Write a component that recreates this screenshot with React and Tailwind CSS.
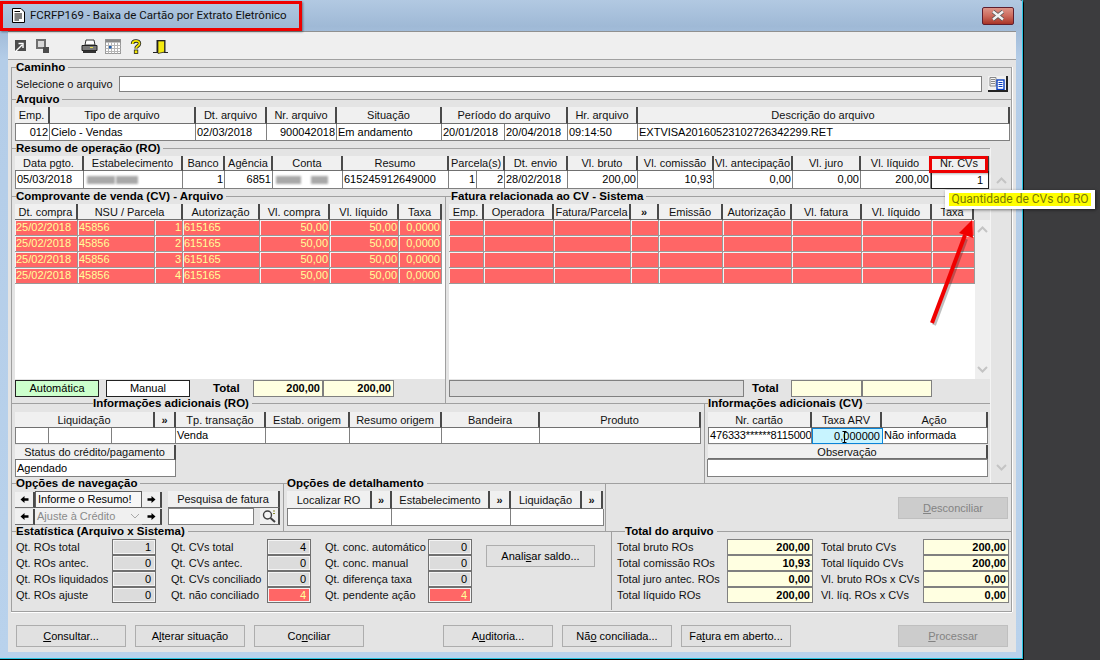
import React from "react";

const F = "font-['Liberation_Sans',Arial,sans-serif]";

function Legend({ tick = "w-[4px]", children }) {
  return (
    <div className="-mt-[6px] flex h-[13px] items-center">
      <div className={`${tick} h-px shrink-0 bg-[#a0a0a0]`} />
      <span className="text-[11.5px] leading-[13px] font-bold whitespace-nowrap text-black">{children}</span>
      <div className="ml-[3px] h-px flex-1 bg-[#a0a0a0]" />
    </div>
  );
}

function H({ w, children }) {
  return (
    <div className={`${w} flex h-full shrink-0 items-center justify-center overflow-hidden border-r-2 border-b border-r-[#4a4a4a] border-b-[#707070] bg-[#f0f0f0] pt-px whitespace-nowrap text-[#111]`}>
      {children}
    </div>
  );
}

function D({ w, children, right, cls = "" }) {
  return (
    <div className={`${w} ${right ? "justify-end" : "justify-start"} ${cls} flex h-full shrink-0 items-center overflow-hidden border-r border-b border-[#808080] bg-white px-px whitespace-nowrap text-black`}>
      {children}
    </div>
  );
}

function Data({ h = "h-[17px]", children }) {
  return <div className={`${h} flex border-l border-[#808080]`}>{children}</div>;
}

function R({ w, children, right, cls = "" }) {
  return (
    <div className={`${w} ${right ? "justify-end" : "justify-start"} ${cls} flex h-full shrink-0 items-center overflow-hidden border-r border-b border-r-[#9a9a9a] border-b-[#9a9a9a] bg-[#ff6666] px-px shadow-[inset_1px_1px_0_#f4f4f4] whitespace-nowrap text-[#ffff99]`}>
      {children}
    </div>
  );
}

function Blur({ w }) {
  return <span className={`${w} inline-block h-[8px] bg-[#a8a8a8] blur-[1px]`} />;
}

function Chevron({ up }) {
  return (
    <svg width="11" height="7" viewBox="0 0 11 7" className="block">
      <path d={up ? "M1 6 L5.5 1.5 L10 6" : "M1 1 L5.5 5.5 L10 1"} fill="none" stroke="#c4c4c4" strokeWidth="2" />
    </svg>
  );
}

function DoubleArrow() {
  return <span className="text-[11px] leading-none font-bold">»</span>;
}

function YellowBox({ w, children, cls = "" }) {
  return (
    <div className={`${w} ${cls} flex h-full shrink-0 items-center justify-end border border-[#808080] bg-[#ffffe1] pr-[2px] font-bold text-black`}>
      {children}
    </div>
  );
}

function Btn({ children, disabled, cls = "" }) {
  return (
    <div className={`${cls} flex h-[22px] w-[110px] shrink-0 items-center justify-center border ${disabled ? "border-[#bfbfbf] bg-[#cccccc] text-[#838383]" : "border-[#adadad] bg-[#e1e1e1] text-black"}`}>
      {children}
    </div>
  );
}

function U({ children }) {
  return <span className="underline">{children}</span>;
}

function StatValue({ v, red }) {
  return (
    <div className={`flex h-[16px] w-[44px] items-center justify-end border border-[#707070] pr-[4px] shadow-[inset_1px_1px_0_#f4f4f4,inset_-1px_-1px_0_#f4f4f4] ${red ? "bg-[#ff6666] text-[#ffff99]" : "bg-[#dcdcdc] text-black"}`}>
      {v}
    </div>
  );
}

function StatCol({ w, mr, items }) {
  return (
    <div className={`${mr} flex shrink-0`}>
      <div className={`${w} flex flex-col`}>
        {items.map((i) => (
          <div key={i[0]} className="flex h-[16px] items-center whitespace-nowrap text-[#111]">{i[0]}</div>
        ))}
      </div>
      <div className="flex flex-col">
        {items.map((i) => (
          <StatValue key={i[0]} v={i[1]} red={i[2]} />
        ))}
      </div>
    </div>
  );
}

function TotCol({ w, vw, items, cls = "" }) {
  return (
    <div className={`${cls} flex shrink-0`}>
      <div className={`${w} flex flex-col`}>
        {items.map((i) => (
          <div key={i[0]} className="flex h-[16px] items-center whitespace-nowrap text-[#111]">{i[0]}</div>
        ))}
      </div>
      <div className="flex flex-col">
        {items.map((i) => (
          <div key={i[0]} className="h-[16px]">
            <YellowBox w={vw}>{i[1]}</YellowBox>
          </div>
        ))}
      </div>
    </div>
  );
}

function NavArrow({ left }) {
  return (
    <div className="flex h-[16px] w-[20px] shrink-0 items-center justify-center border-r-2 border-b border-r-[#4a4a4a] border-b-[#707070] bg-[#f0f0f0]">
      <svg width="9" height="9" viewBox="0 0 9 9">
        <path d={left ? "M0.5 4.5 L4.5 1 V3.3 H8.5 V5.7 H4.5 V8 Z" : "M8.5 4.5 L4.5 1 V3.3 H0.5 V5.7 H4.5 V8 Z"} fill="#000" />
      </svg>
    </div>
  );
}

const rows = ["1", "2", "3", "4"];

export default function App() {
  return (
    <div className={`${F} relative h-[660px] w-[1100px] overflow-hidden bg-[#3c3c3e] text-[11px] leading-none`}>
      {/* window */}
      <div className="flex h-[660px] w-[1024px] flex-col rounded-tr-[4px] border-r border-b border-r-[#000] border-b-[#000] bg-[linear-gradient(to_bottom,#b2c9e2_0%,#9fb9d6_4%,#b4cde8_9%,#b9d2ec_100%)]">
        <div className="flex h-[659px] flex-col border-r border-b border-[#29c4e0]">
          {/* title bar */}
          <div className="flex h-[31px] shrink-0 items-center justify-between pr-[8px] pl-[12px]">
            <div className="flex items-center gap-[5px]">
              <svg width="13" height="15" viewBox="0 0 13 15">
                <path d="M0.5 0.5 H9 L12.5 4 V14.5 H0.5 Z" fill="#fff" stroke="#000" />
                <path d="M2.5 3.5 H8 M2.5 6 H10 M2.5 8 H10 M2.5 10 H10 M2.5 12 H7" stroke="#000" />
              </svg>
              <span className="font-['Roboto',sans-serif] text-[11.5px] text-[#101010]">FCRFP169 - Baixa de Cartão por Extrato Eletrônico</span>
            </div>
            <div className="flex h-[18px] w-[32px] items-center justify-center rounded-[2px] border border-[#5e1e2e] bg-gradient-to-b from-[#dd9488] via-[#cc6a5c] to-[#a83226]">
              <svg width="14" height="11" viewBox="0 0 14 11">
                <path d="M2 1.5 L12 9.5 M12 1.5 L2 9.5" stroke="#555" strokeWidth="4" />
                <path d="M2 1.5 L12 9.5 M12 1.5 L2 9.5" stroke="#f2f2f2" strokeWidth="2.4" />
              </svg>
            </div>
          </div>

          {/* body */}
          <div className="mr-[6px] ml-[8px] flex h-[621px] shrink-0 flex-col bg-[#e4e4e4]">
            {/* toolbar */}
            <div className="flex h-[29px] shrink-0 items-center border-t border-b border-t-[#909090] border-b-[#a0a0a0] bg-[#efefef] pt-[1px] pl-[6px]">
              <svg width="13" height="14" viewBox="0 0 13 14" className="mr-[8px]">
                <rect x="1" y="1" width="11" height="11" fill="#4c4c4c" />
                <path d="M1 13 L8 6 M4.5 4.5 H9 V9" stroke="#fff" strokeWidth="1.4" fill="none" />
              </svg>
              <svg width="15" height="15" viewBox="0 0 15 15" className="mr-[31px]">
                <rect x="1" y="0" width="10" height="10" fill="#6e6e6e" />
                <rect x="3" y="2" width="6" height="6" fill="#d8d8d8" />
                <rect x="8" y="8" width="6" height="6" fill="#4c4c4c" />
              </svg>
              <svg width="17" height="15" viewBox="0 0 17 15" className="mr-[7px]">
                <path d="M5 1 H13 L14 6 H4 Z" fill="#fff" stroke="#333" />
                <path d="M1 6.5 H16 V11.5 H1 Z" fill="#7a7a7a" stroke="#222" />
                <path d="M2 11.5 H15 V14 H2 Z" fill="#333" />
                <path d="M9 8.5 H12" stroke="#e8e050" strokeWidth="1" />
              </svg>
              <svg width="16" height="15" viewBox="0 0 16 15" className="mr-[9px]">
                <rect x="0.5" y="0.5" width="15" height="14" fill="#fff" stroke="#999" />
                <rect x="0.5" y="0.5" width="15" height="3" fill="#888" />
                <path d="M0.5 6.5 H15.5 M0.5 9.5 H15.5 M0.5 12.5 H15.5 M3.5 3.5 V14.5 M6.5 3.5 V14.5 M9.5 3.5 V14.5 M12.5 3.5 V14.5" stroke="#b5b5b5" />
                <rect x="4" y="7" width="2.5" height="2.5" fill="#1f5fb0" />
              </svg>
              <svg width="12" height="15" viewBox="0 0 12 15" className="mr-[11px]">
                <path d="M2.5 5 C2.5 1 9.5 1 9.5 4.5 C9.5 7 6 7 6 9.5" fill="none" stroke="#222" strokeWidth="3.4" />
                <path d="M2.5 5 C2.5 1 9.5 1 9.5 4.5 C9.5 7 6 7 6 9.5" fill="none" stroke="#f2e600" strokeWidth="1.8" />
                <rect x="4.3" y="11" width="3.5" height="3.5" fill="#f2e600" stroke="#222" strokeWidth="0.8" />
              </svg>
              <svg width="15" height="15" viewBox="0 0 15 15">
                <path d="M3.5 13.5 V1 H12.5 V13.5" fill="#222" />
                <path d="M5 2 H11.5 V13 L5 14.5 Z" fill="#f4ea10" stroke="#222" strokeWidth="0.7" />
                <path d="M0 13.5 H5 M11 13.5 H15" stroke="#222" />
              </svg>
            </div>

            {/* frame */}
            <div className="mt-[7px] ml-[3px] flex h-[545px] w-[1001px] shrink-0 flex-col border-x border-b border-[#a0a0a0] shadow-[1px_0_0_#fff,0_1px_0_#fff]">
              {/* Caminho */}
              <div className="h-[32px] shrink-0">
                <Legend>Caminho</Legend>
                <div className="mt-[2px] flex h-[16px] items-center pl-[4px]">
                  <span className="w-[103px] shrink-0 whitespace-nowrap text-[#111]">Selecione o arquivo</span>
                  <div className="h-full w-[863px] shrink-0 border border-[#808080] bg-white" />
                  <div className="ml-[6px] flex h-[16px] w-[20px] shrink-0 items-center justify-center border-r-2 border-b-2 border-r-[#222] border-b-[#222] bg-[#f0f0f0]">
                    <svg width="16" height="13" viewBox="0 0 16 13">
                      <path d="M1 0.5 H7 V9 H1 Z" fill="#f4f4f4" stroke="#888" />
                      <path d="M2 2.5 H6 M2 4.5 H6 M2 6.5 H6" stroke="#888" />
                      <rect x="8" y="3" width="7" height="9.5" fill="#fff" stroke="#0a3fc0" strokeWidth="1.4" />
                      <path d="M9.5 5.5 H13.5 M9.5 7.5 H13.5 M9.5 9.5 H13.5" stroke="#0a3fc0" />
                    </svg>
                  </div>
                </div>
              </div>

              {/* Arquivo */}
              <div className="h-[49px] shrink-0">
                <Legend>Arquivo</Legend>
                <div className="mt-px pl-[3px]">
                  <div className="flex h-[17px]">
                    <H w="w-[35px]">Emp.</H>
                    <H w="w-[146px]">Tipo de arquivo</H>
                    <H w="w-[71px]">Dt. arquivo</H>
                    <H w="w-[70px]">Nr. arquivo</H>
                    <H w="w-[105px]">Situação</H>
                    <H w="w-[126px]">Período do arquivo</H>
                    <H w="w-[70px]">Hr. arquivo</H>
                    <H w="w-[372px]">Descrição do arquivo</H>
                  </div>
                  <Data>
                    <D w="w-[34px]" right>012</D>
                    <D w="w-[146px]">Cielo - Vendas</D>
                    <D w="w-[71px]">02/03/2018</D>
                    <D w="w-[70px]" right>900042018</D>
                    <D w="w-[105px]">Em andamento</D>
                    <D w="w-[63px]">20/01/2018</D>
                    <D w="w-[63px]">20/04/2018</D>
                    <D w="w-[70px]">09:14:50</D>
                    <D w="w-[372px]">EXTVISA20160523102726342299.RET</D>
                  </Data>
                </div>
              </div>

              {/* Main block */}
              <div className="flex h-[335px] shrink-0">
                <div className="flex w-[978px] shrink-0 flex-col">
                  {/* Resumo */}
                  <div className="h-[48px] shrink-0">
                    <Legend>Resumo de operação (RO)</Legend>
                    <div className="mt-px pl-[3px]">
                      <div className="flex h-[15px]">
                        <H w="w-[69px]">Data pgto.</H>
                        <H w="w-[99px]">Estabelecimento</H>
                        <H w="w-[42px]">Banco</H>
                        <H w="w-[48px]">Agência</H>
                        <H w="w-[70px]">Conta</H>
                        <H w="w-[106px]">Resumo</H>
                        <H w="w-[56px]">Parcela(s)</H>
                        <H w="w-[63px]">Dt. envio</H>
                        <H w="w-[70px]">Vl. bruto</H>
                        <H w="w-[76px]">Vl. comissão</H>
                        <H w="w-[79px]">Vl. antecipação</H>
                        <H w="w-[68px]">Vl. juro</H>
                        <H w="w-[70px]">Vl. líquido</H>
                        <H w="w-[58px]">Nr. CVs</H>
                      </div>
                      <Data h="h-[18px]">
                        <D w="w-[68px]">05/03/2018</D>
                        <D w="w-[99px]" cls="gap-px pl-[3px]"><Blur w="w-[28px]" /><Blur w="w-[22px]" /></D>
                        <D w="w-[42px]" right>1</D>
                        <D w="w-[48px]" right>6851</D>
                        <D w="w-[70px]" cls="gap-[10px] pl-[3px]"><Blur w="w-[25px]" /><Blur w="w-[17px]" /></D>
                        <D w="w-[106px]">615245912649000</D>
                        <D w="w-[28px]" right>1</D>
                        <D w="w-[28px]" right>2</D>
                        <D w="w-[63px]">28/02/2018</D>
                        <D w="w-[70px]" right>200,00</D>
                        <D w="w-[76px]" right>10,93</D>
                        <D w="w-[79px]" right>0,00</D>
                        <D w="w-[68px]" right>0,00</D>
                        <D w="w-[70px]" right>200,00</D>
                        <div className="flex h-full w-[58px] shrink-0 items-center justify-end border border-[#222] bg-white pr-[5px]">1</div>
                      </Data>
                    </div>
                  </div>

                  {/* Split comprovante / fatura */}
                  <div className="flex h-[207px] shrink-0">
                    <div className="w-[434px] shrink-0 border-r border-[#a0a0a0]">
                      <Legend>Comprovante de venda (CV) - Arquivo</Legend>
                      <div className="mt-px pl-[3px]">
                        <div className="flex h-[16px]">
                          <H w="w-[63px]">Dt. compra</H>
                          <H w="w-[105px]">NSU / Parcela</H>
                          <H w="w-[77px]">Autorização</H>
                          <H w="w-[70px]">Vl. compra</H>
                          <H w="w-[69px]">Vl. líquido</H>
                          <H w="w-[43px]">Taxa</H>
                        </div>
                        <div className="h-[159px] bg-white">
                          {rows.map((n) => (
                            <div key={n} className="flex h-[16px]">
                              <R w="w-[63px]">25/02/2018</R>
                              <R w="w-[77px]">45856</R>
                              <R w="w-[28px]" right>{n}</R>
                              <R w="w-[77px]">615165</R>
                              <R w="w-[70px]" right>50,00</R>
                              <R w="w-[69px]" right>50,00</R>
                              <R w="w-[43px]" right>0,0000</R>
                            </div>
                          ))}
                        </div>
                        <div className="mt-px flex h-[17px] items-center">
                          <div className="flex h-full w-[84px] items-center justify-center border border-[#222] bg-[#ccffcc]">Automática</div>
                          <div className="ml-[7px] flex h-full w-[84px] items-center justify-center border border-[#222] bg-white">Manual</div>
                          <span className="ml-[23px] w-[40px] text-[11.5px] font-bold">Total</span>
                          <YellowBox w="w-[70px]">200,00</YellowBox>
                          <YellowBox w="w-[71px]">200,00</YellowBox>
                        </div>
                      </div>
                    </div>
                    <div className="min-w-0 flex-1">
                      <Legend tick="w-[5px]">Fatura relacionada ao CV - Sistema</Legend>
                      <div className="mt-px pl-[3px]">
                        <div className="flex h-[16px]">
                          <H w="w-[35px]">Emp.</H>
                          <H w="w-[70px]">Operadora</H>
                          <H w="w-[77px]">Fatura/Parcela</H>
                          <H w="w-[28px]"><DoubleArrow /></H>
                          <H w="w-[64px]">Emissão</H>
                          <H w="w-[69px]">Autorização</H>
                          <H w="w-[70px]">Vl. fatura</H>
                          <H w="w-[70px]">Vl. líquido</H>
                          <H w="w-[42px]">Taxa</H>
                        </div>
                        <div className="flex h-[159px]">
                          <div className="w-[526px] shrink-0 bg-white">
                            {rows.map((n) => (
                              <div key={n} className="flex h-[16px]">
                                <R w="w-[35px]" />
                                <R w="w-[70px]" />
                                <R w="w-[77px]" />
                                <R w="w-[28px]" />
                                <R w="w-[64px]" />
                                <R w="w-[69px]" />
                                <R w="w-[70px]" />
                                <R w="w-[70px]" />
                                <R w="w-[43px]" />
                              </div>
                            ))}
                          </div>
                          <div className="flex w-[15px] shrink-0 flex-col items-center justify-between bg-[#efefef] py-[6px]">
                            <Chevron up />
                            <Chevron />
                          </div>
                        </div>
                        <div className="mt-px flex h-[17px] items-center">
                          <div className="h-full w-[295px] border border-[#808080] bg-[#dcdcdc]" />
                          <span className="ml-[8px] w-[39px] text-[11.5px] font-bold">Total</span>
                          <YellowBox w="w-[71px]" />
                          <YellowBox w="w-[70px]" />
                        </div>
                      </div>
                    </div>
                  </div>

                  {/* Info */}
                  <div className="flex h-[80px] shrink-0">
                    <div className="w-[693px] shrink-0 border-r border-[#a0a0a0]">
                      <Legend tick="w-[81px]">Informações adicionais (RO)</Legend>
                      <div className="mt-[2px] pl-[3px]">
                        <div className="flex h-[16px]">
                          <H w="w-[140px]">Liquidação</H>
                          <H w="w-[21px]"><DoubleArrow /></H>
                          <H w="w-[90px]">Tp. transação</H>
                          <H w="w-[84px]">Estab. origem</H>
                          <H w="w-[92px]">Resumo origem</H>
                          <H w="w-[98px]">Bandeira</H>
                          <H w="w-[161px]">Produto</H>
                        </div>
                        <Data h="h-[16px]">
                          <D w="w-[33px]" />
                          <D w="w-[63px]" />
                          <D w="w-[64px]" />
                          <D w="w-[90px]">Venda</D>
                          <D w="w-[84px]" />
                          <D w="w-[92px]" />
                          <D w="w-[98px]" />
                          <D w="w-[161px]" />
                        </Data>
                        <div className="mt-px flex h-[15px]">
                          <H w="w-[161px]">Status do crédito/pagamento</H>
                        </div>
                        <Data>
                          <D w="w-[160px]">Agendado</D>
                        </Data>
                      </div>
                    </div>
                    <div className="min-w-0 flex-1">
                      <Legend tick="w-[3px]">Informações adicionais (CV)</Legend>
                      <div className="mt-[2px] pl-[3px]">
                        <div className="flex h-[16px]">
                          <H w="w-[104px]">Nr. cartão</H>
                          <H w="w-[70px]">Taxa ARV</H>
                          <H w="w-[106px]">Ação</H>
                        </div>
                        <Data h="h-[16px]">
                          <D w="w-[103px]" cls="tracking-[-0.15px]">476333******8115000</D>
                          <div className="relative flex h-full w-[71px] shrink-0 items-center justify-end border border-[#0a84d8] bg-[#c8f4ff] pr-[2px]">
                            0,000000
                            <svg width="5" height="12" viewBox="0 0 5 12" className="absolute top-[2px] left-[29px]">
                              <path d="M2.5 0 V11 M0.5 0.5 H4.5 M0.5 11.5 H4.5" stroke="#000" strokeWidth="1" />
                            </svg>
                          </div>
                          <D w="w-[105px]">Não informada</D>
                        </Data>
                        <div className="mt-px flex h-[14px]">
                          <H w="w-[280px]">Observação</H>
                        </div>
                        <div className="-ml-px h-[18px] w-[281px] border border-[#808080] bg-white" />
                      </div>
                    </div>
                  </div>
                </div>

                {/* outer scroll column */}
                <div className="flex w-[21px] shrink-0 flex-col items-center justify-between border-l border-[#f4f4f4] pt-[29px] pb-[12px]">
                  <Chevron up />
                  <Chevron />
                </div>
              </div>

              {/* Nav row */}
              <div className="flex h-[48px] shrink-0">
                <div className="w-[272px] shrink-0 border-r border-[#a0a0a0]">
                  <Legend>Opções de navegação</Legend>
                  <div className="mt-[1px] flex pl-[3px]">
                    <div className="flex w-[146px] shrink-0 flex-col">
                      <div className="flex h-[17px] items-center">
                        <NavArrow left />
                        <div className="flex h-[17px] w-[107px] shrink-0 items-center border border-[#606060] bg-[#f7f7f7] px-[2px]">Informe o Resumo!</div>
                        <NavArrow />
                      </div>
                      <div className="flex h-[17px] items-center">
                        <NavArrow left />
                        <div className="flex h-[17px] w-[107px] shrink-0 items-center justify-between border-b border-[#a0a0a0] bg-[#f0f0f0] px-[2px] text-[#8a8a8a]">
                          Ajuste à Crédito
                          <svg width="10" height="6" viewBox="0 0 10 6"><path d="M1 1 L5 5 L9 1" fill="none" stroke="#a8a8a8" /></svg>
                        </div>
                        <NavArrow />
                      </div>
                    </div>
                    <div className="ml-[7px] flex w-[112px] shrink-0 flex-col">
                      <div className="h-[17px]"><H w="w-[112px]">Pesquisa de fatura</H></div>
                      <div className="flex h-[17px] items-center">
                        <div className="h-full w-[86px] border border-[#808080] bg-white" />
                        <div className="ml-[6px] flex h-[17px] w-[20px] items-center justify-center border-r-2 border-b border-r-[#4a4a4a] border-b-[#707070] bg-[#f0f0f0]">
                          <svg width="14" height="13" viewBox="0 0 14 13">
                            <circle cx="5.5" cy="5" r="4" fill="#f4f4f4" stroke="#404040" strokeWidth="1.4" />
                            <path d="M8.5 8 L13 12" stroke="#404040" strokeWidth="2" />
                            <path d="M11 1 H13 M11 3.5 H13" stroke="#8a8a30" />
                          </svg>
                        </div>
                      </div>
                    </div>
                  </div>
                </div>
                <div className="w-[322px] shrink-0 border-r border-[#a0a0a0]">
                  <Legend tick="w-[3px]">Opções de detalhamento</Legend>
                  <div className="mt-[1px] pl-[3px]">
                    <div className="flex h-[18px]">
                      <H w="w-[85px]">Localizar RO</H>
                      <H w="w-[20px]"><DoubleArrow /></H>
                      <H w="w-[98px]">Estabelecimento</H>
                      <H w="w-[21px]"><DoubleArrow /></H>
                      <H w="w-[71px]">Liquidação</H>
                      <H w="w-[21px]"><DoubleArrow /></H>
                    </div>
                    <Data>
                      <D w="w-[104px]" />
                      <D w="w-[119px]" />
                      <D w="w-[93px]" />
                    </Data>
                  </div>
                </div>
                <div className="flex min-w-0 flex-1 justify-end border-t border-[#a0a0a0] pt-[13px] pr-[3px]">
                  <Btn disabled><span><U>D</U>esconciliar</span></Btn>
                </div>
              </div>

              {/* Stats row */}
              <div className="flex h-[79px] shrink-0">
                <div className="w-[600px] shrink-0 border-r border-[#a0a0a0]">
                  <Legend>Estatística (Arquivo x Sistema)</Legend>
                  <div className="mt-px flex pl-[4px]">
                    <StatCol w="w-[96px]" mr="mr-[15px]" items={[["Qt. ROs total", "1"], ["Qt. ROs antec.", "0"], ["Qt. ROs liquidados", "0"], ["Qt. ROs ajuste", "0"]]} />
                    <StatCol w="w-[96px]" mr="mr-[14px]" items={[["Qt. CVs total", "4"], ["Qt. CVs antec.", "0"], ["Qt. CVs conciliado", "0"], ["Qt. não conciliado", "4", true]]} />
                    <StatCol w="w-[103px]" mr="mr-[14px]" items={[["Qt. conc. automático", "0"], ["Qt. conc. manual", "0"], ["Qt. diferença taxa", "0"], ["Qt. pendente ação", "4", true]]} />
                    <Btn cls="mt-[6px] !w-[109px]"><span>Anali<U>s</U>ar saldo...</span></Btn>
                  </div>
                </div>
                <div className="min-w-0 flex-1">
                  <Legend tick="w-[13px]">Total do arquivo</Legend>
                  <div className="mt-px flex pl-[5px]">
                    <TotCol w="w-[110px]" vw="w-[86px]" items={[["Total bruto ROs", "200,00"], ["Total comissão ROs", "10,93"], ["Total juro antec. ROs", "0,00"], ["Total líquido ROs", "200,00"]]} />
                    <TotCol cls="ml-[8px]" w="w-[102px]" vw="w-[86px]" items={[["Total bruto CVs", "200,00"], ["Total líquido CVs", "200,00"], ["Vl. bruto ROs x CVs", "0,00"], ["Vl. líq. ROs x CVs", "0,00"]]} />
                  </div>
                </div>
              </div>
            </div>

            {/* bottom buttons */}
            <div className="mt-[13px] flex pl-[8px]">
              <Btn><span><U>C</U>onsultar...</span></Btn>
              <Btn cls="ml-[9px]"><span>A<U>l</U>terar situação</span></Btn>
              <Btn cls="ml-[9px]"><span>Co<U>n</U>ciliar</span></Btn>
              <Btn cls="ml-[79px]"><span>A<U>u</U>ditoria...</span></Btn>
              <Btn cls="ml-[9px]"><span>Nã<U>o</U> conciliada...</span></Btn>
              <Btn cls="ml-[9px]"><span>Fa<U>t</U>ura em aberto...</span></Btn>
              <Btn disabled cls="ml-[107px]"><span><U>P</U>rocessar</span></Btn>
            </div>
          </div>
        </div>
      </div>

      {/* annotations */}
      <div className="pointer-events-none absolute top-[1px] left-0 h-[30px] w-[302px] border-[3px] border-[#ee0000] shadow-[1px_1px_2px_rgba(0,0,0,0.4)]" />
      <div className="pointer-events-none absolute top-[156px] left-[929px] h-[17px] w-[59px] border-[3px] border-[#ee0000] shadow-[1px_1px_2px_rgba(0,0,0,0.3)]" />
      <div className="absolute top-[190px] left-[945px] flex h-[19px] w-[150px] items-center justify-center bg-white shadow-[1px_1px_3px_rgba(0,0,0,0.5)]">
        <span className="bg-[#ffff00] px-[2px] font-['Roboto',sans-serif] text-[12px] leading-[13px] whitespace-nowrap text-[#7a7a00]">Quantidade de CVs do RO</span>
      </div>
      <svg width="60" height="120" viewBox="0 0 60 120" className="absolute top-[215px] left-[925px]">
        <path d="M8 108 L40 22" stroke="#000" strokeOpacity="0.25" strokeWidth="4" transform="translate(1 2)" />
        <path d="M7 108 L40 20" stroke="#f00000" strokeWidth="4" />
        <path d="M47 5 L34 18 L48 23 Z" fill="#f00000" />
      </svg>
    </div>
  );
}
